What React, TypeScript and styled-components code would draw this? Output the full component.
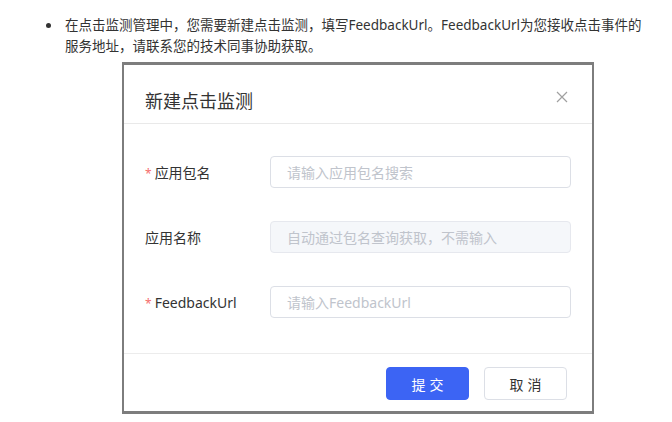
import React from "react";
import styled, { createGlobalStyle } from "styled-components";

const Global = createGlobalStyle`
  html, body { margin: 0; padding: 0; background: #ffffff; }
  body { font-family: "Noto Sans", "Noto Sans CJK SC", sans-serif; color: #333; }
`;

const Page = styled.div`
  width: 672px;
  height: 422px;
  padding-top: 15px;
  box-sizing: border-box;
  overflow: hidden;
`;

const Bullet = styled.div`
  display: flex;
  align-items: flex-start;
  padding-left: 46px;
`;

const Dot = styled.span`
  width: 5px;
  height: 5px;
  border-radius: 50%;
  background: #333;
  margin-top: 8px;
  margin-right: 14px;
  flex: none;
`;

const Para = styled.p`
  margin: 0;
  width: 586px;
  font-size: 13.5px;
  line-height: 21px;
  color: #333;
`;

const Frame = styled.div`
  margin: 5px 0 0 122px;
  width: 472px;
  height: 352px;
  box-sizing: border-box;
  border-style: solid;
  border-color: #7d7d7d;
  border-width: 3px 2px 3px 2px;
  background: #fff;
  display: flex;
  flex-direction: column;
`;

const Header = styled.div`
  height: 59px;
  display: flex;
  align-items: center;
  justify-content: space-between;
  padding: 0 24px 0 21px;
  border-bottom: 1px solid #e9e9e9;
  box-sizing: border-box;
`;

const Title = styled.h2`
  margin: 12px 0 0 0;
  font-size: 18px;
  font-weight: 400;
  color: #333;
`;

const Close = styled.span`
  width: 12px;
  height: 12px;
  margin-top: 5px;
  display: inline-flex;
  color: #a0a0a0;
`;

const Body = styled.div`
  flex: 1;
  padding: 32px 21px 0 21px;
  display: flex;
  flex-direction: column;
  gap: 33px;
`;

const Row = styled.div`
  display: flex;
  align-items: center;
  height: 32px;
`;

const Label = styled.label`
  width: 125px;
  font-size: 14px;
  color: #333;
  flex: none;
`;

const Star = styled.span`
  color: #f56c6c;
  margin-right: 3px;
  font-size: 12px;
`;

const Input = styled.input<{ $disabled?: boolean }>`
  flex: 1;
  height: 32px;
  box-sizing: border-box;
  border: 1px solid ${(p) => (p.$disabled ? "#e6e8ee" : "#dcdfe6")};
  background: ${(p) => (p.$disabled ? "#f5f7fa" : "#fff")};
  border-radius: 4px;
  padding: 0 16px;
  font-family: "Noto Sans", "Noto Sans CJK SC", sans-serif;
  font-size: 14px;
  outline: none;
  &::placeholder { color: #c0c4cc; }
`;

const Footer = styled.div`
  border-top: 1px solid #ececec;
  height: 58px;
  box-sizing: border-box;
  display: flex;
  justify-content: flex-end;
  align-items: flex-start;
  gap: 15px;
  padding: 13px 25px 0 0;
`;

const Button = styled.button<{ $primary?: boolean }>`
  width: 83px;
  height: 33px;
  border-radius: 4px;
  font-family: "Noto Sans", "Noto Sans CJK SC", sans-serif;
  font-size: 14px;
  letter-spacing: 4px;
  padding: 0 0 0 4px;
  border: 1px solid ${(p) => (p.$primary ? "#3c64f4" : "#dcdfe6")};
  background: ${(p) => (p.$primary ? "#3c64f4" : "#fff")};
  color: ${(p) => (p.$primary ? "#fff" : "#333")};
`;

export default function App() {
  return (
    <Page>
      <Global />
      <Bullet>
        <Dot />
        <Para>
          在点击监测管理中，您需要新建点击监测，填写FeedbackUrl。FeedbackUrl为您接收点击事件的服务地址，请联系您的技术同事协助获取。
        </Para>
      </Bullet>
      <Frame>
        <Header>
          <Title>新建点击监测</Title>
          <Close>
            <svg width="12" height="12" viewBox="0 0 12 12">
              <path d="M1 1L11 11M11 1L1 11" stroke="currentColor" strokeWidth="1.2" />
            </svg>
          </Close>
        </Header>
        <Body>
          <Row>
            <Label><Star>*</Star>应用包名</Label>
            <Input placeholder="请输入应用包名搜索" />
          </Row>
          <Row>
            <Label>应用名称</Label>
            <Input $disabled disabled placeholder="自动通过包名查询获取，不需输入" />
          </Row>
          <Row>
            <Label><Star>*</Star>FeedbackUrl</Label>
            <Input placeholder="请输入FeedbackUrl" />
          </Row>
        </Body>
        <Footer>
          <Button $primary>提交</Button>
          <Button>取消</Button>
        </Footer>
      </Frame>
    </Page>
  );
}
